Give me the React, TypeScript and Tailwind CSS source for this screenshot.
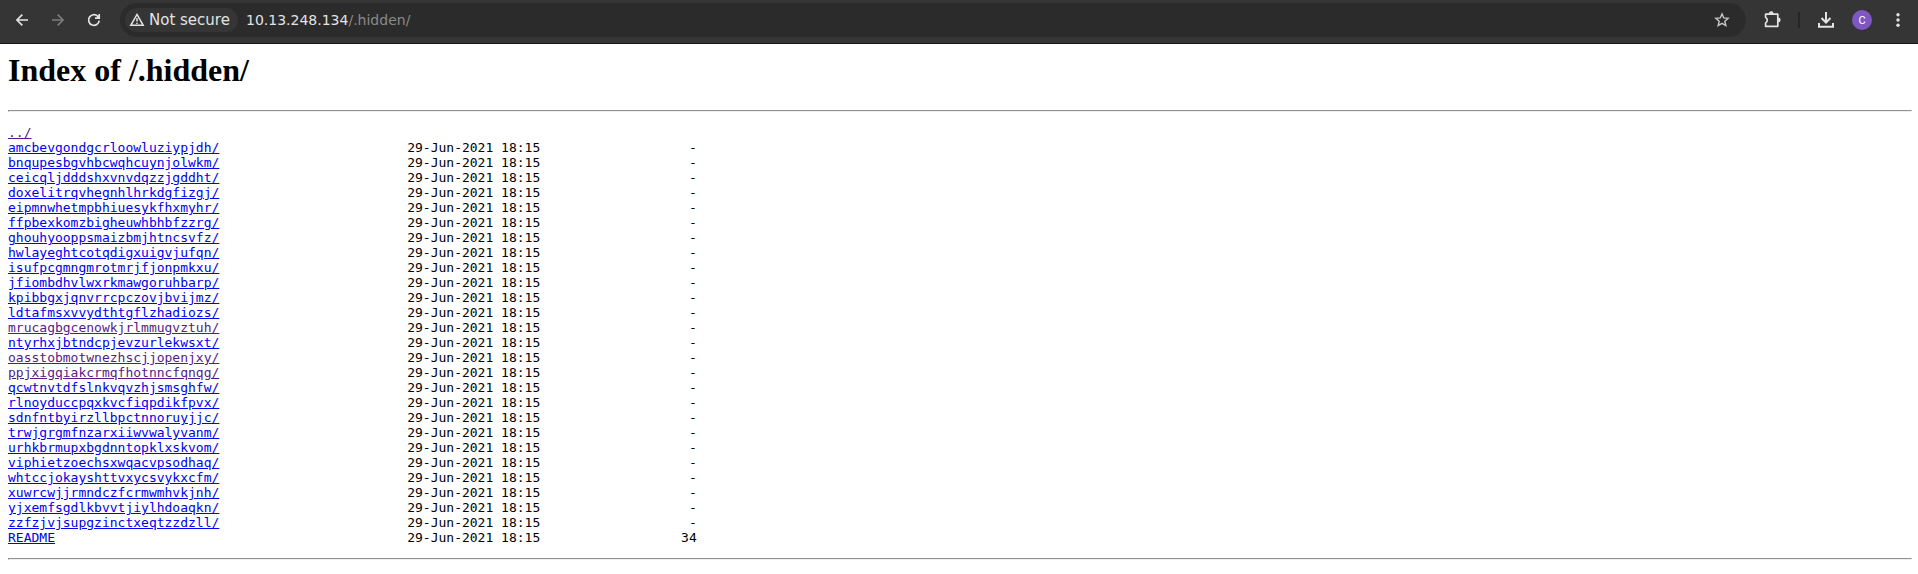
const NAMES = [
  'amcbevgondgcrloowluziypjdh/', 'bnqupesbgvhbcwqhcuynjolwkm/', 'ceicqljdddshxvnvdqzzjgddht/',
  'doxelitrqvhegnhlhrkdgfizgj/', 'eipmnwhetmpbhiuesykfhxmyhr/', 'ffpbexkomzbigheuwhbhbfzzrg/',
  'ghouhyooppsmaizbmjhtncsvfz/', 'hwlayeghtcotqdigxuigvjufqn/', 'isufpcgmngmrotmrjfjonpmkxu/',
  'jfiombdhvlwxrkmawgoruhbarp/', 'kpibbgxjqnvrrcpczovjbvijmz/', 'ldtafmsxvvydthtgflzhadiozs/',
  'mrucagbgcenowkjrlmmugvztuh/', 'ntyrhxjbtndcpjevzurlekwsxt/', 'oasstobmotwnezhscjjopenjxy/',
  'ppjxigqiakcrmqfhotnncfqnqg/', 'qcwtnvtdfslnkvqvzhjsmsghfw/', 'rlnoyduccpqxkvcfiqpdikfpvx/',
  'sdnfntbyirzllbpctnnoruyjjc/', 'trwjgrgmfnzarxiiwvwalyvanm/', 'urhkbrmupxbgdnntopklxskvom/',
  'viphietzoechsxwqacvpsodhaq/', 'whtccjokayshttvxycsvykxcfm/', 'xuwrcwjjrmndczfcrmwmhvkjnh/',
  'yjxemfsgdlkbvvtjiylhdoaqkn/', 'zzfzjvjsupgzinctxeqtzzdzll/', 'README',
];
const VISITED = new Set(['../', 'mrucagbgcenowkjrlmmugvztuh/', 'oasstobmotwnezhscjjopenjxy/', 'ppjxigqiakcrmqfhotnncfqnqg/']);

function Entry({ name }: { name: string }) {
  return (
    <a href="#" className={VISITED.has(name) ? 'text-[#551a8b] underline' : 'text-[#0000ee] underline'}>
      {name}
    </a>
  );
}

function Rule() {
  return <hr className="border border-t-[#929292] border-r-[#eeeeee] border-b-[#eeeeee] border-l-[#929292]" />;
}

function Toolbar() {
  return (
    <header className="flex h-11 items-start border-b border-[#151216] bg-[#353535] text-[#e3e3e3]">
      <div className="flex h-10 w-[120px] shrink-0 items-center pl-3">
        <svg className="size-5" viewBox="0 0 20 20" fill="none" stroke="currentColor" strokeWidth="1.6">
          <path d="M16 10H5M10.3 4.6 4.9 10l5.4 5.4" />
        </svg>
        <svg className="ml-4 size-5 text-[#7c7c7c]" viewBox="0 0 20 20" fill="none" stroke="currentColor" strokeWidth="1.6">
          <path d="M4 10h11M9.7 4.6l5.4 5.4-5.4 5.4" />
        </svg>
        <svg className="ml-4 size-5" viewBox="0 0 20 20" fill="none" stroke="currentColor" strokeWidth="1.7">
          <path d="M15.2 10.6a5.3 5.3 0 1 1-1.6-4.4L15.2 7.8M15.2 4v4.2H11" />
        </svg>
      </div>
      <div className="mt-[3px] flex h-[34px] w-[1626px] shrink-0 items-center rounded-full bg-[#2b2b2b] pl-[5px]">
        <div className="flex h-6 w-[113px] items-center rounded-full bg-[#353535] pl-1">
          <svg className="size-4" viewBox="0 0 16 16" fill="none" stroke="currentColor" strokeWidth="1.5">
            <path d="M8 2.4 14.2 13.3H1.8zM8 6v3.6M8 10.7v1.4" />
          </svg>
          <span className="ml-1 font-['DejaVu_Sans'] text-[15px] leading-5 whitespace-nowrap">Not secure</span>
        </div>
        <span className="ml-2 font-['DejaVu_Sans'] text-[14px] leading-5 whitespace-nowrap">
          10.13.248.134<span className="text-[#8a8a8a]">/.hidden/</span>
        </span>
        <svg className="mr-4 ml-auto size-4 text-[#c7c7c7]" viewBox="0 0 16 16" fill="none" stroke="currentColor" strokeWidth="1.4">
          <path d="m8 1.9 1.75 4.05 4.4.4-3.33 2.9 1 4.3L8 11.3l-3.82 2.25 1-4.3-3.33-2.9 4.4-.4z" />
        </svg>
      </div>
      <div className="flex h-10 grow items-center">
        <svg className="ml-4 size-5" viewBox="0 0 20 20" fill="none" stroke="currentColor" strokeWidth="1.7" strokeLinejoin="round">
          <path d="M3.6 4.2h12.2v12.1H3.6v-3.4c2.2-1 2.2-4.3 0-5.3z" />
          <path d="M7.6 3.8a1.6 1.6 0 0 1 3.2 0M16.2 8.4a1.6 1.6 0 0 1 0 3.2" fill="currentColor" />
        </svg>
        <span className="ml-4 h-4 w-[2px] bg-[#252525]" />
        <svg className="ml-4 size-5" viewBox="0 0 20 20" fill="none" stroke="currentColor" strokeWidth="2">
          <path d="M10 2v10M5.5 8l4.5 4.5L14.5 8M3 13v3.8h14V13" />
        </svg>
        <span className="ml-4 flex size-5 items-center justify-center rounded-full bg-[#7e57c2] font-[Roboto] text-[11px] leading-none text-white">C</span>
        <svg className="ml-4 size-5" viewBox="0 0 20 20" fill="currentColor">
          <circle cx="10" cy="4.7" r="1.7" /><circle cx="10" cy="10" r="1.7" /><circle cx="10" cy="15.3" r="1.7" />
        </svg>
      </div>
    </header>
  );
}

export default function App() {
  return (
    <div className="h-[574px] overflow-hidden bg-white text-black">
      <Toolbar />
      <main className="pt-2 pr-1.5 pl-2">
        <h1 className="mb-[21px] font-['Liberation_Serif'] text-[32px] leading-[37px] font-bold">Index of /.hidden/</h1>
        <Rule />
        <pre className="my-[13px] font-['DejaVu_Sans_Mono'] text-[13px] leading-[15px]">
          <Entry name="../" />{'\n'}
          {NAMES.map((name) => (
            <span key={name}>
              <Entry name={name} />
              {' '.repeat(51 - name.length) + '29-Jun-2021 18:15' + (name === 'README' ? '34' : '-').padStart(20) + '\n'}
            </span>
          ))}
        </pre>
        <Rule />
      </main>
    </div>
  );
}
